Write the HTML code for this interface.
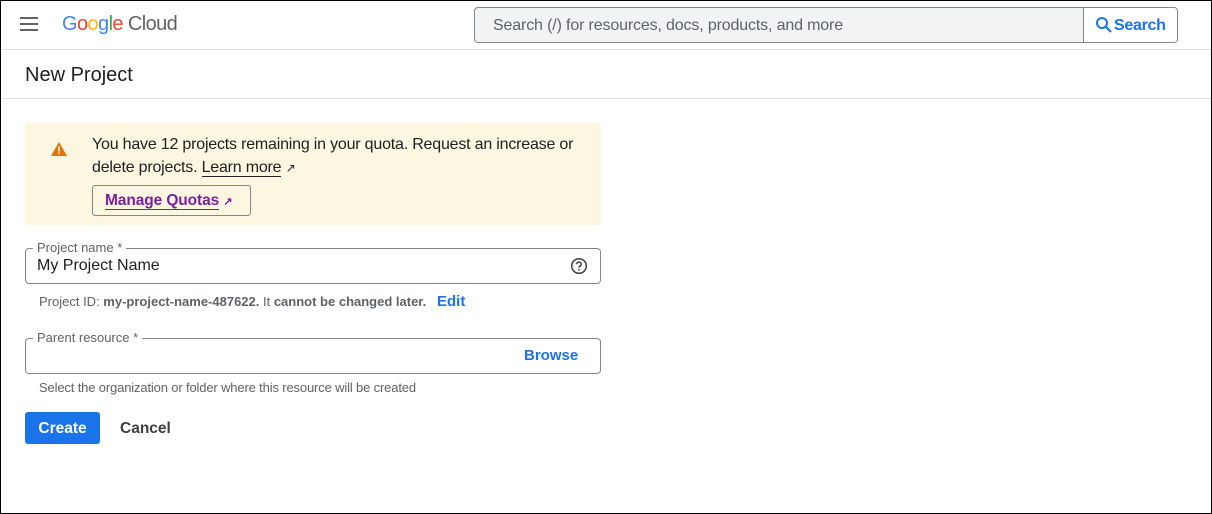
<!DOCTYPE html>
<html><head><meta charset="utf-8"><style>
*{box-sizing:border-box;margin:0;padding:0}
body{width:1212px;height:514px;overflow:hidden;background:#fff;font-family:"Liberation Sans",Arial,sans-serif;position:relative;color:#202124}
.frame{position:absolute;left:0;top:0;width:1212px;height:514px;border:1px solid #000;pointer-events:none}
.a{position:absolute;white-space:nowrap}
.hr{position:absolute;left:1px;right:1px;height:1px;background:#dadce0}
</style></head><body>
<div class="a" style="left:20px;top:17px;width:18px;height:2px;background:#5f6368"></div>
<div class="a" style="left:20px;top:23px;width:18px;height:2px;background:#5f6368"></div>
<div class="a" style="left:20px;top:29px;width:18px;height:2px;background:#5f6368"></div>
<div class="a" style="left:62px;top:13px;font-size:20px;letter-spacing:-0.6px"><span style="color:#4285f4">G</span><span style="color:#ea4335">o</span><span style="color:#fbbc05">o</span><span style="color:#4285f4">g</span><span style="color:#34a853">l</span><span style="color:#ea4335">e</span> <span style="color:#5f6368">Cloud</span></div>
<div class="a" style="left:474px;top:7px;width:704px;height:36px;border:1px solid #80868b;border-radius:4px;background:#f1f3f4;overflow:hidden">
<div class="a" style="left:18px;top:9px;font-size:16px;letter-spacing:-0.15px;color:#5f6368">Search (/) for resources, docs, products, and more</div>
<div class="a" style="left:608px;top:0;width:96px;height:34px;background:#fff;border-left:1px solid #80868b"></div>
<svg class="a" style="left:620px;top:8px" width="18" height="18" viewBox="0 0 18 18"><circle cx="7" cy="7" r="5" fill="none" stroke="#1a73e8" stroke-width="2"/><path d="M10.5 10.5L16 16" stroke="#1a73e8" stroke-width="2.2"/></svg>
<div class="a" style="left:639px;top:9px;font-size:16px;color:#1a73e8;font-weight:bold;letter-spacing:-0.3px">Search</div>
</div>
<div class="hr" style="top:49px"></div>
<div class="a" style="left:25px;top:64px;font-size:20px;color:#202124">New Project</div>
<div class="hr" style="top:98px"></div>

<div class="a" style="left:25px;top:123px;width:576px;height:102px;background:#fdf6e0;border-radius:3px"></div>
<svg class="a" style="left:51px;top:142px" width="16" height="14" viewBox="0 0 16 14"><path d="M8 0L16 14H0Z" fill="#e37400"/><rect x="7.2" y="4.5" width="1.6" height="5" fill="#fff"/><rect x="7.2" y="10.5" width="1.6" height="1.6" fill="#fff"/></svg>
<div class="a" style="left:92px;top:133px;font-size:16px;line-height:23px;letter-spacing:-0.2px;color:#202124">You have 12 projects remaining in your quota. Request an increase or<br>delete projects. <span style="border-bottom:1px solid #202124">Learn more</span> <span style="font-size:12px">&#x2197;</span></div>
<div class="a" style="left:92px;top:185px;width:159px;height:31px;border:1px solid #80868b;border-radius:3px"></div>
<div class="a" style="left:105px;top:192px;font-size:15.5px;color:#7b1fa2;font-weight:bold;letter-spacing:-0.1px"><span style="border-bottom:1px solid #7b1fa2">Manage Quotas</span> <span style="font-size:11px">&#x2197;</span></div>

<div class="a" style="left:25px;top:248px;width:576px;height:36px;border:1px solid #80868b;border-radius:4px"></div>
<div class="a" style="left:33px;top:240px;padding:0 4px;background:#fff;font-size:13px;color:#5f6368">Project name *</div>
<div class="a" style="left:37px;top:257px;font-size:16px;color:#202124">My Project Name</div>
<svg class="a" style="left:570px;top:257px" width="18" height="18" viewBox="0 0 18 18"><circle cx="9" cy="9" r="7.3" fill="none" stroke="#3c4043" stroke-width="1.5"/><path d="M6.8 7.2a2.2 2.2 0 1 1 3 2c-.6.3-.8.7-.8 1.4" fill="none" stroke="#3c4043" stroke-width="1.5"/><circle cx="9" cy="12.8" r="0.9" fill="#3c4043"/></svg>
<div class="a" style="left:39px;top:294px;font-size:13px;color:#5f6368">Project ID: <b>my-project-name-487622.</b> It <b>cannot be changed later.</b></div>
<div class="a" style="left:437px;top:293px;font-size:15px;color:#1a73e8;font-weight:bold">Edit</div>

<div class="a" style="left:25px;top:338px;width:576px;height:36px;border:1px solid #80868b;border-radius:4px"></div>
<div class="a" style="left:33px;top:330px;padding:0 4px;background:#fff;font-size:13px;color:#5f6368">Parent resource *</div>
<div class="a" style="left:524px;top:347px;font-size:15px;color:#1a73e8;font-weight:bold">Browse</div>
<div class="a" style="left:39px;top:380px;font-size:13px;letter-spacing:-0.15px;color:#5f6368">Select the organization or folder where this resource will be created</div>

<div class="a" style="left:25px;top:412px;width:75px;height:32px;background:#1a73e8;border-radius:3px;color:#fff;font-size:15.5px;font-weight:bold;text-align:center;line-height:33px">Create</div>
<div class="a" style="left:120px;top:420px;font-size:15.5px;color:#3c4043;font-weight:bold">Cancel</div>
<div class="frame"></div>
</body></html>
